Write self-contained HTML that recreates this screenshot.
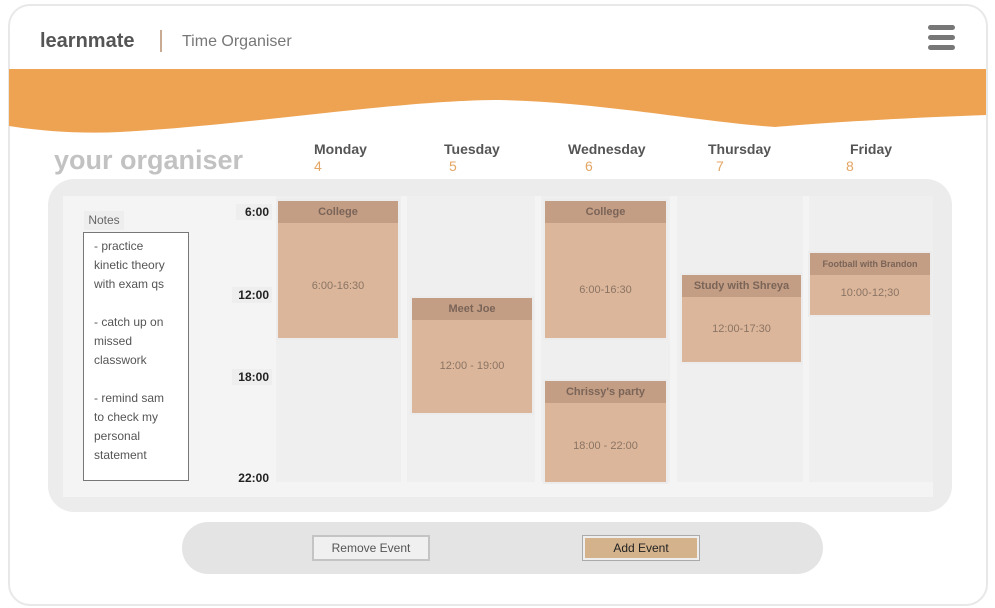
<!DOCTYPE html>
<html><head><meta charset="utf-8"><style>
*{margin:0;padding:0;box-sizing:border-box}
body{width:995px;height:608px;background:#fff;position:relative;overflow:hidden;font-family:"Liberation Sans",sans-serif}
.a{position:absolute}
.frame{left:8px;top:4px;width:980px;height:602px;border:2px solid #e8e8e8;border-radius:22px}
.day{font-weight:bold;font-size:14px;color:#555}
.num{font-size:14px;color:#e3a665}
.col{background:#efefef;top:196px;height:286px}
.ev{background:#dcb69a;box-shadow:0 0 0 2px #ececec}
.ev .h{background:#c49e84;height:22px;text-align:center;font-size:11px;font-weight:bold;color:#7a6458;line-height:22px}
.ev .t{text-align:center;font-size:11px;color:#8a7464;position:absolute;left:0;right:0}
.tm{font-size:12px;font-weight:bold;color:#222;background:#eee;padding:1px 3px;text-align:right}
.notes{font-size:12px;color:#555;line-height:19px}
</style></head><body>
<div class="a frame"></div>
<div class="a" style="left:40px;top:30px;font-size:20px;font-weight:bold;color:#555">learnmate</div>
<div class="a" style="left:160px;top:30px;width:2px;height:22px;background:#c8ab92"></div>
<div class="a" style="left:182px;top:33px;font-size:16px;color:#777">Time Organiser</div>
<div class="a" style="left:928px;top:25px;width:27px;height:5px;border-radius:3px;background:#777"></div>
<div class="a" style="left:928px;top:35px;width:27px;height:5px;border-radius:3px;background:#777"></div>
<div class="a" style="left:928px;top:45px;width:27px;height:5px;border-radius:3px;background:#777"></div>
<svg class="a" style="left:0;top:0" width="995" height="140"><path d="M9 69 H986 V115 C900 118 820 123 775 127 C700 122 600 102 500 100 C400 100 250 125 120 132 C80 134 40 131 9 126 Z" fill="#eea353"/></svg>
<div class="a" style="left:54px;top:145px;font-size:27px;font-weight:bold;color:#c2c2c2">your organiser</div>
<div class="a day" style="left:314px;top:141px">Monday</div><div class="a num" style="left:314px;top:158px">4</div>
<div class="a day" style="left:444px;top:141px">Tuesday</div><div class="a num" style="left:449px;top:158px">5</div>
<div class="a day" style="left:568px;top:141px">Wednesday</div><div class="a num" style="left:585px;top:158px">6</div>
<div class="a day" style="left:708px;top:141px">Thursday</div><div class="a num" style="left:716px;top:158px">7</div>
<div class="a day" style="left:850px;top:141px">Friday</div><div class="a num" style="left:846px;top:158px">8</div>
<div class="a" style="left:48px;top:179px;width:904px;height:333px;background:#ececec;border-radius:26px"></div>
<div class="a" style="left:63px;top:196px;width:870px;height:301px;background:#f4f4f4"></div>
<div class="a col" style="left:276px;width:125px"></div>
<div class="a col" style="left:407px;width:128px"></div>
<div class="a col" style="left:541px;width:129px"></div>
<div class="a col" style="left:677px;width:126px"></div>
<div class="a col" style="left:809px;width:124px"></div>
<div class="a tm" style="left:236px;top:204px;width:36px">6:00</div>
<div class="a tm" style="left:232px;top:287px;width:40px">12:00</div>
<div class="a tm" style="left:232px;top:369px;width:40px">18:00</div>
<div class="a tm" style="left:232px;top:470px;width:40px;background:none">22:00</div>
<div class="a" style="left:84px;top:211px;width:40px;height:19px;background:#eee;font-size:12px;color:#666;text-align:center;line-height:19px">Notes</div>
<div class="a notes" style="left:83px;top:232px;width:106px;height:249px;border:1px solid #777;background:#fff;padding:4px 14px 0 10px">- practice kinetic theory with exam qs<br><br>- catch up on missed classwork<br><br>- remind sam to check my personal statement</div>
<div class="a ev" style="left:278px;top:201px;width:120px;height:137px"><div class="h">College</div><div class="t" style="top:79px">6:00-16:30</div></div>
<div class="a ev" style="left:412px;top:298px;width:120px;height:115px"><div class="h">Meet Joe</div><div class="t" style="top:62px">12:00 - 19:00</div></div>
<div class="a ev" style="left:545px;top:201px;width:121px;height:137px"><div class="h">College</div><div class="t" style="top:83px">6:00-16:30</div></div>
<div class="a ev" style="left:545px;top:381px;width:121px;height:101px"><div class="h">Chrissy's party</div><div class="t" style="top:59px">18:00 - 22:00</div></div>
<div class="a ev" style="left:682px;top:275px;width:119px;height:87px"><div class="h">Study with Shreya</div><div class="t" style="top:48px">12:00-17:30</div></div>
<div class="a ev" style="left:810px;top:253px;width:120px;height:62px"><div class="h" style="font-size:9px">Football with Brandon</div><div class="t" style="top:34px">10:00-12;30</div></div>
<div class="a" style="left:182px;top:522px;width:641px;height:52px;background:#e4e4e4;border-radius:26px"></div>
<div class="a" style="left:312px;top:535px;width:118px;height:26px;background:#f0f0f0;border:2px solid #c4c4c4;font-size:12px;color:#555;text-align:center;line-height:22px">Remove Event</div>
<div class="a" style="left:582px;top:535px;width:118px;height:26px;background:#d4b38c;border:1px solid #aaa;box-shadow:inset 0 0 0 2px #eee;font-size:12px;color:#222;text-align:center;line-height:24px">Add Event</div>
</body></html>
